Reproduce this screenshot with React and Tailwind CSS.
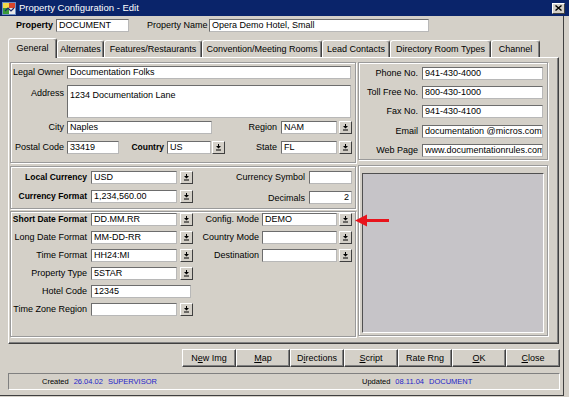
import React from "react";

const Input = ({ w, h = "h-[13px]", items = "items-center", right, children }) => (
  <div
    className={`${w} ${h} shrink-0 flex ${items} ${
      right ? "justify-end pr-[2px]" : "pl-[2px]"
    } bg-white border border-t-[#6d6d6d] border-l-[#6d6d6d] border-r-[#b8b8b8] border-b-[#b8b8b8] text-[9px] leading-none whitespace-nowrap overflow-hidden`}
  >
    {children}
  </div>
);

const Drop = ({ ml = "ml-[2px]" }) => (
  <div
    className={`${ml} w-[13px] h-[13px] shrink-0 flex items-center justify-center bg-[#d4d0c8] border border-t-white border-l-white border-r-[#404040] border-b-[#404040]`}
  >
    <svg width="7" height="7" viewBox="0 0 7 7">
      <path d="M3 0h1v2h2L3.5 4.5 1 2h2z" fill="#000" />
      <rect x="1" y="5.5" width="5" height="1" fill="#000" />
    </svg>
  </div>
);

const Label = ({ w, bold, children }) => (
  <div
    className={`${w} shrink-0 text-right whitespace-nowrap leading-none ${
      bold ? "font-bold text-[8.5px]" : "text-[9px]"
    }`}
  >
    {children}
  </div>
);

const Tab = ({ w, active, children }) => (
  <div
    className={`${w} ${
      active ? "h-[20px] -mb-px z-10" : "h-[17px]"
    } relative shrink-0 bg-[#d4d0c8] border-t border-l border-r border-t-white border-l-white border-r-[#404040] rounded-t-[3px] shadow-[inset_-1px_0_0_#808080] flex items-center justify-center text-[9px] leading-none whitespace-nowrap`}
  >
    {children}
  </div>
);

const Button = ({ children }) => (
  <div className="w-[54px] h-[18px] shrink-0 flex items-center justify-center bg-[#d4d0c8] border border-t-white border-l-white border-r-[#404040] border-b-[#404040] shadow-[inset_-1px_-1px_0_#808080] text-[9px] leading-none whitespace-nowrap">
    {children}
  </div>
);

const box =
  "border border-[#9a9a9a] shadow-[inset_1px_1px_0_#fff,1px_1px_0_#fff]";

const App = () => {
  return (
    <div className="w-[569px] h-[397px] bg-[#d4d0c8] relative overflow-hidden text-black font-[family-name:Liberation_Sans,Arial,sans-serif]">
      {/* Title bar */}
      <div className="h-[16px] bg-[#0a246a] flex items-center">
        <svg width="14" height="13" viewBox="0 0 14 13" className="ml-[2px]">
          <rect x="0" y="0" width="14" height="13" fill="#6d8fc4" />
          <rect x="1" y="1" width="6" height="5" fill="#f2d94a" />
          <rect x="7" y="1" width="6" height="5" fill="#d9462b" />
          <rect x="1" y="6" width="6" height="6" fill="#3a9b3a" />
          <rect x="7" y="6" width="6" height="6" fill="#e9e9e9" />
          <path d="M3 9l3-3 3 3 3-3" stroke="#1c2d6b" strokeWidth="1.2" fill="none" />
        </svg>
        <span className="ml-[3px] text-white text-[9.5px] leading-none">
          Property Configuration - Edit
        </span>
        <div className="ml-auto mr-[4px] w-[13px] h-[11px] bg-[#d4d0c8] border border-t-white border-l-white border-r-[#404040] border-b-[#404040] flex items-center justify-center">
          <svg width="7" height="6" viewBox="0 0 7 6">
            <path d="M0.5 0.5l6 5M6.5 0.5l-6 5" stroke="#000" strokeWidth="1.4" />
          </svg>
        </div>
      </div>

      <div className="w-[564px] h-[380px] border-r border-b border-r-[#404040] border-b-[#404040] flex flex-col">
        {/* Property row */}
        <div className="flex items-center mt-[3px] pl-[16px]">
          <div className="w-[40px] font-bold text-[9px] leading-none">Property</div>
          <Input w="w-[73px]">DOCUMENT</Input>
          <div className="ml-[18px] w-[62px] text-[9px] leading-none">Property Name</div>
          <Input w="w-[220px]">Opera Demo Hotel, Small</Input>
        </div>

        {/* Tabs */}
        <div className="flex items-end h-[19px] mt-[6px] pl-[8px]">
          <Tab w="w-[49px]" active>General</Tab>
          <Tab w="w-[47px]">Alternates</Tab>
          <Tab w="w-[98px]">Features/Restaurants</Tab>
          <Tab w="w-[120px]">Convention/Meeting Rooms</Tab>
          <Tab w="w-[68px]">Lead Contacts</Tab>
          <Tab w="w-[101px]">Directory Room Types</Tab>
          <Tab w="w-[49px]">Channel</Tab>
        </div>

        {/* Panel */}
        <div className="ml-[8px] w-[551px] h-[287px] border border-t-white border-l-white border-r-[#404040] border-b-[#404040] shadow-[inset_-1px_-1px_0_#808080] pl-[1px] pt-[4px] flex">
          {/* Left column */}
          <div className="w-[346px] flex flex-col">
            {/* Address */}
            <div className={`h-[101px] ${box}`}>
              <div className="flex items-center mt-[3px]">
                <Label w="w-[53px]">Legal Owner</Label>
                <div className="w-[3px]" />
                <Input w="w-[284px]">Documentation Folks</Input>
              </div>
              <div className="flex items-start mt-[6px]">
                <div className="pt-[4px]">
                  <Label w="w-[53px]">Address</Label>
                </div>
                <div className="w-[3px]" />
                <Input w="w-[284px]" h="h-[33px]" items="items-start pt-[5px]">
                  1234 Documentation Lane
                </Input>
              </div>
              <div className="flex items-center mt-[3px] pr-[3px]">
                <Label w="w-[53px]">City</Label>
                <div className="w-[3px]" />
                <Input w="w-[145px]">Naples</Input>
                <div className="flex-1 text-right text-[9px] leading-none mr-[4px]">Region</div>
                <Input w="w-[56px]">NAM</Input>
                <Drop />
              </div>
              <div className="flex items-center mt-[7px]">
                <Label w="w-[53px]">Postal Code</Label>
                <div className="w-[3px]" />
                <Input w="w-[52px]">33419</Input>
                <Label w="w-[45px]" bold>Country</Label>
                <div className="w-[3px]" />
                <Input w="w-[44px]">US</Input>
                <Drop ml="ml-[1px]" />
                <Label w="w-[52px]">State</Label>
                <div className="w-[4px]" />
                <Input w="w-[56px]">FL</Input>
                <Drop />
              </div>
            </div>

            {/* Currency */}
            <div className={`mt-[3px] h-[43px] ${box}`}>
              <div className="flex items-center mt-[4px] pr-[3px]">
                <Label w="w-[76px]" bold>Local Currency</Label>
                <div className="w-[4px]" />
                <Input w="w-[86px]">USD</Input>
                <Drop ml="ml-[3px]" />
                <div className="flex-1 text-right text-[9px] leading-none mr-[4px]">Currency Symbol</div>
                <Input w="w-[43px]"></Input>
              </div>
              <div className="flex items-center mt-[5px] pr-[3px]">
                <Label w="w-[76px]" bold>Currency Format</Label>
                <div className="w-[4px]" />
                <Input w="w-[86px]">1,234,560.00</Input>
                <Drop ml="ml-[3px]" />
                <div className="flex-1 text-right text-[9px] leading-none mr-[4px] pt-[3px]">Decimals</div>
                <div className="pt-[2px]">
                  <Input w="w-[43px]" right>2</Input>
                </div>
              </div>
            </div>

            {/* Dates */}
            <div className={`mt-[2px] h-[126px] ${box}`}>
              <div className="flex items-center mt-[1px] pr-[3px]">
                <Label w="w-[76px]" bold>Short Date Format</Label>
                <div className="w-[4px]" />
                <Input w="w-[86px]">DD.MM.RR</Input>
                <Drop ml="ml-[3px]" />
                <div className="flex-1 text-right text-[9px] leading-none mr-[3px]">Config. Mode</div>
                <Input w="w-[75px]">DEMO</Input>
                <Drop />
              </div>
              <div className="flex items-center mt-[5px] pr-[3px]">
                <Label w="w-[76px]">Long Date Format</Label>
                <div className="w-[4px]" />
                <Input w="w-[86px]">MM-DD-RR</Input>
                <Drop ml="ml-[3px]" />
                <div className="flex-1 text-right text-[9px] leading-none mr-[3px]">Country Mode</div>
                <Input w="w-[75px]"></Input>
                <Drop />
              </div>
              <div className="flex items-center mt-[5px] pr-[3px]">
                <Label w="w-[76px]">Time Format</Label>
                <div className="w-[4px]" />
                <Input w="w-[86px]">HH24:MI</Input>
                <Drop ml="ml-[3px]" />
                <div className="flex-1 text-right text-[9px] leading-none mr-[3px]">Destination</div>
                <Input w="w-[75px]"></Input>
                <Drop />
              </div>
              <div className="flex items-center mt-[5px]">
                <Label w="w-[76px]">Property Type</Label>
                <div className="w-[4px]" />
                <Input w="w-[86px]">5STAR</Input>
                <Drop ml="ml-[3px]" />
              </div>
              <div className="flex items-center mt-[5px]">
                <Label w="w-[76px]">Hotel Code</Label>
                <div className="w-[4px]" />
                <Input w="w-[100px]">12345</Input>
              </div>
              <div className="flex items-center mt-[5px]">
                <Label w="w-[76px]">Time Zone Region</Label>
                <div className="w-[4px]" />
                <Input w="w-[86px]"></Input>
                <Drop ml="ml-[3px]" />
              </div>
            </div>
          </div>

          {/* Right column */}
          <div className="ml-[2px] w-[190px] flex flex-col">
            <div className={`h-[98px] ${box}`}>
              {[
                ["Phone No.", "941-430-4000", "mt-[4px]"],
                ["Toll Free No.", "800-430-1000", "mt-[6px]"],
                ["Fax No.", "941-430-4100", "mt-[6px]"],
                ["Email", "documentation @micros.com", "mt-[7px]"],
                ["Web Page", "www.documentationrules.com", "mt-[6px]"],
              ].map(([label, value, mt]) => (
                <div key={label} className={`flex items-center ${mt}`}>
                  <Label w="w-[59px]">{label}</Label>
                  <div className="w-[4px]" />
                  <Input w="w-[121px]">{value}</Input>
                </div>
              ))}
            </div>
            <div className={`mt-[5px] h-[171px] ${box} pt-[7px] pl-[3px]`}>
              <div className="w-[182px] h-[160px] bg-[#c6c4c8] border border-t-[#505050] border-l-[#505050] border-r-white border-b-white" />
            </div>
          </div>
        </div>

        {/* Buttons */}
        <div className="flex justify-end mt-[5px] pr-[3px]">
          <Button>
            N<span className="underline">e</span>w Img
          </Button>
          <Button>
            <span className="underline">M</span>ap
          </Button>
          <Button>
            D<span className="underline">i</span>rections
          </Button>
          <Button>
            <span className="underline">S</span>cript
          </Button>
          <Button>Rate Rng</Button>
          <Button>
            <span className="underline">O</span>K
          </Button>
          <Button>
            <span className="underline">C</span>lose
          </Button>
        </div>

        {/* Status bar */}
        <div className="ml-[8px] w-[552px] h-[17px] mt-[6px] border border-t-[#808080] border-l-[#808080] border-r-white border-b-white flex items-center text-[7.5px] leading-none whitespace-nowrap">
          <div className="w-[353px] pl-[33px] flex">
            <span>Created</span>
            <span className="ml-[5px] text-[#2424c8]">26.04.02</span>
            <span className="ml-[5px] text-[#2424c8]">SUPERVISOR</span>
          </div>
          <span>Updated</span>
          <span className="ml-[5px] text-[#2424c8]">08.11.04</span>
          <span className="ml-[5px] text-[#2424c8]">DOCUMENT</span>
        </div>
      </div>

      {/* Red callout arrow */}
      <svg
        width="35"
        height="13"
        viewBox="0 0 35 13"
        className="absolute left-[355px] top-[214px]"
      >
        <path d="M0 6.5L12 0.5v4.5h22v3H12v4.5z" fill="#e8141c" />
      </svg>
    </div>
  );
};

export default App;
